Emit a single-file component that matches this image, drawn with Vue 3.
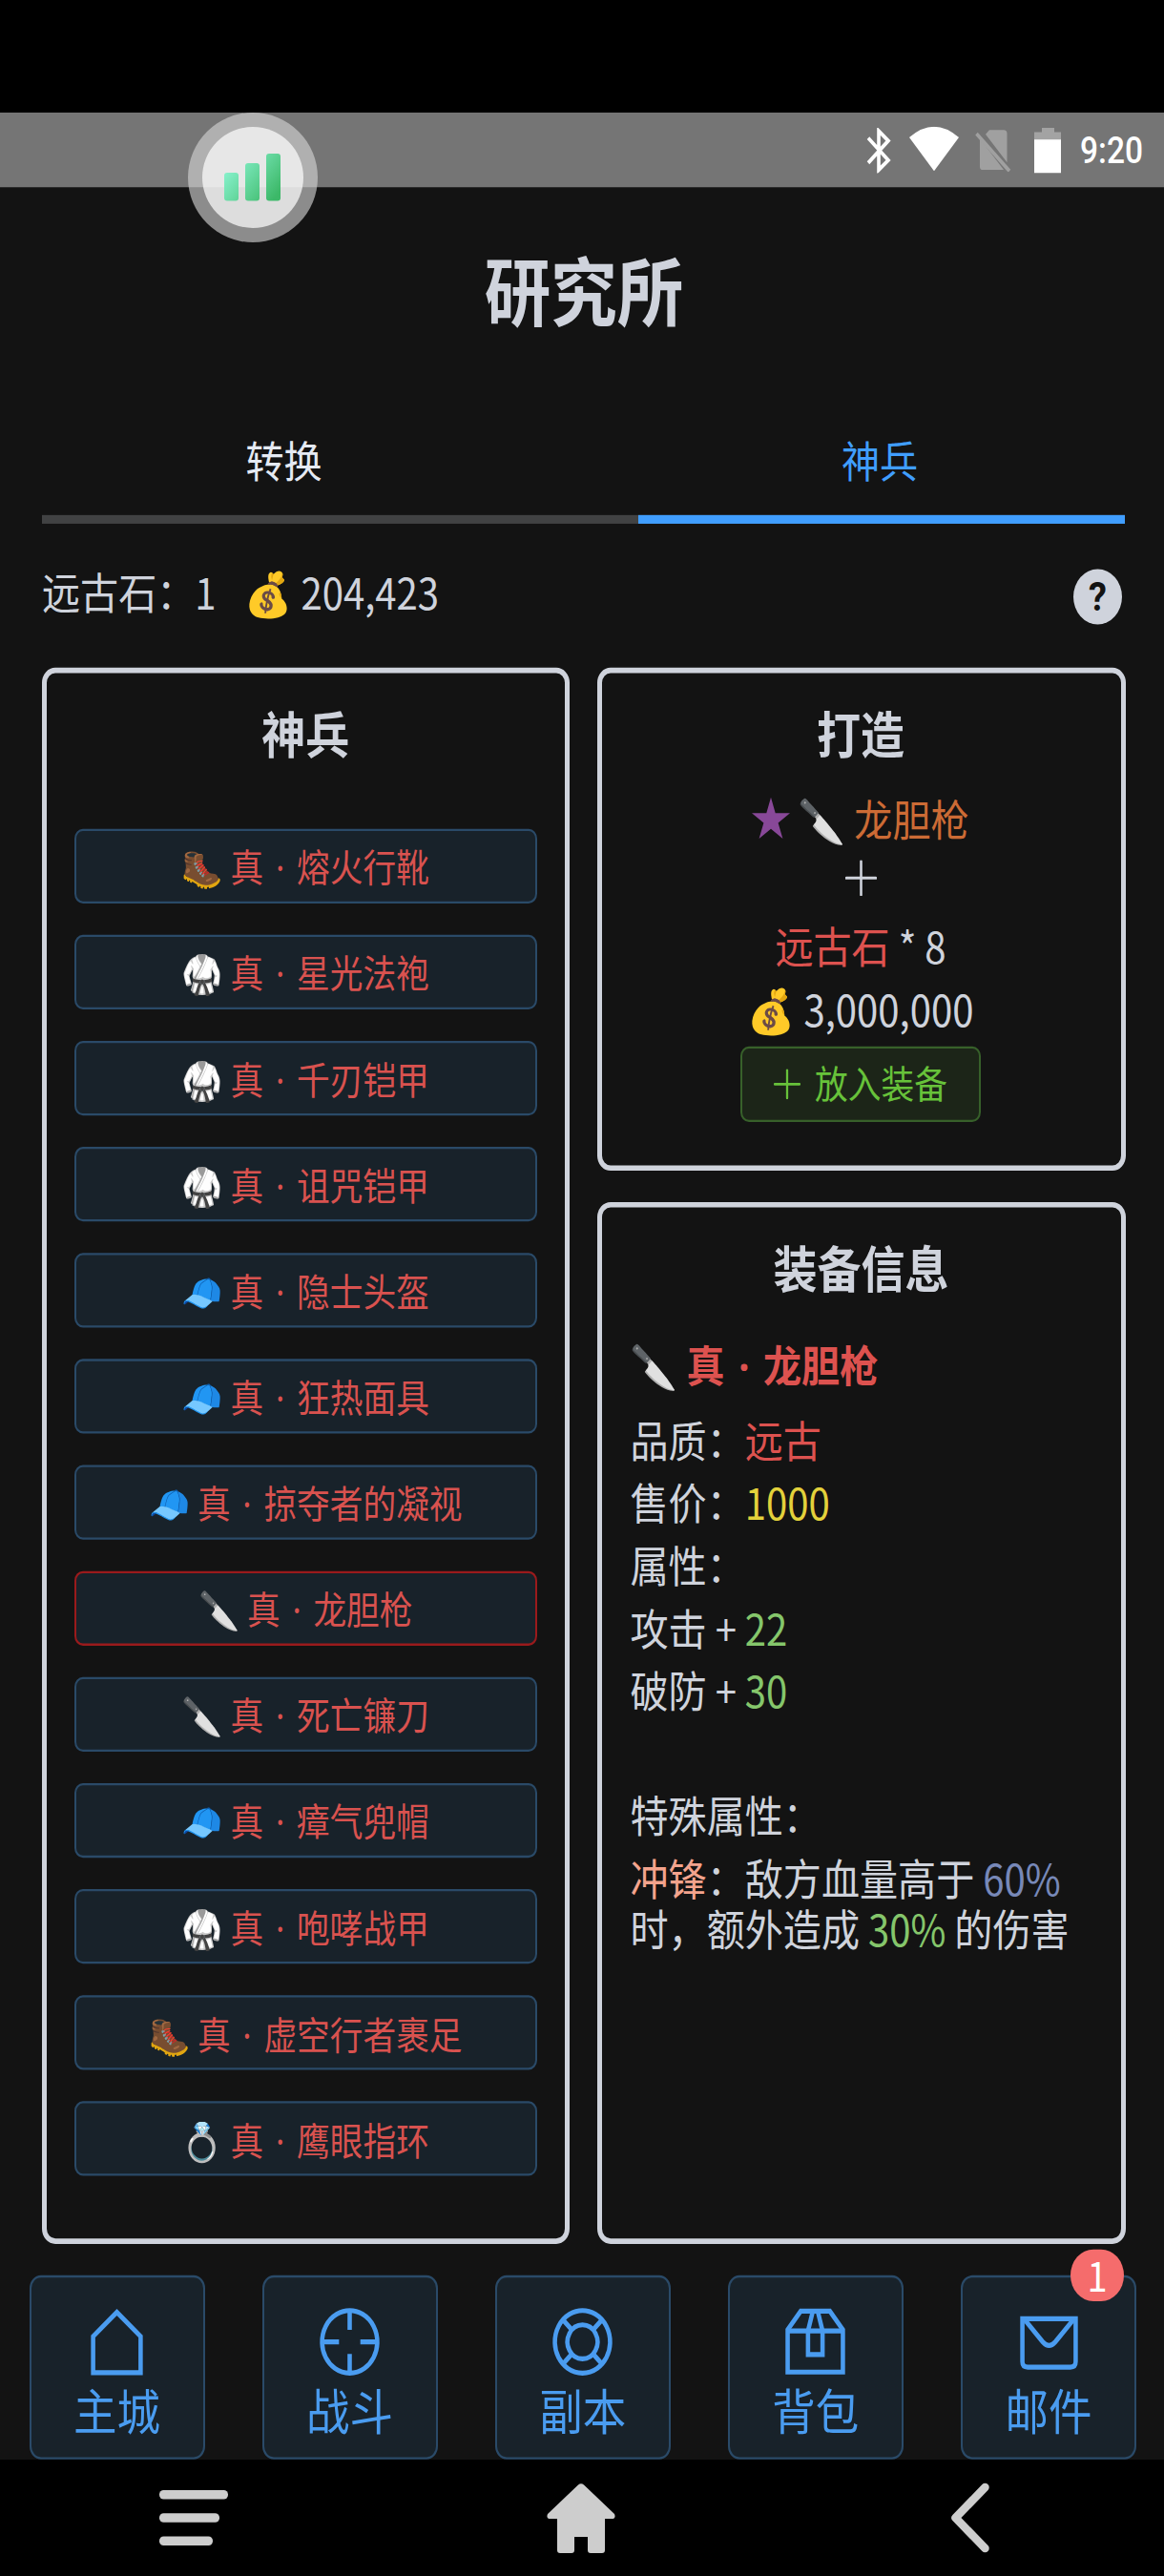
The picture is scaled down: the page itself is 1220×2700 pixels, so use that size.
<script setup>
const weapons = [
  { icon: '🥾', name: '熔火行靴' },
  { icon: '🥋', name: '星光法袍' },
  { icon: '🥋', name: '千刃铠甲' },
  { icon: '🥋', name: '诅咒铠甲' },
  { icon: '🧢', name: '隐士头盔' },
  { icon: '🧢', name: '狂热面具' },
  { icon: '🧢', name: '掠夺者的凝视' },
  { icon: '🔪', name: '龙胆枪', active: true },
  { icon: '🔪', name: '死亡镰刀' },
  { icon: '🧢', name: '瘴气兜帽' },
  { icon: '🥋', name: '咆哮战甲' },
  { icon: '🥾', name: '虚空行者裹足' },
  { icon: '💍', name: '鹰眼指环' },
]

const navItems = [
  { label: '主城', paths: ['M7.5 27 L32 5 L56.500 27 V60 H7.5 Z'] },
  { label: '战斗', paths: ['M32 3.500 a28.500 28.500 0 1 0 .01 0 Z', 'M32 4 V21 M32 43 V60 M4 32 H21 M43 32 H60'] },
  { label: '副本', paths: ['M32 3.500 a28.500 28.500 0 1 0 .01 0 Z', 'M32 16.500 a15.500 15.500 0 1 0 .01 0 Z', 'M12.200 12.200 L21.400 21.400 M51.800 12.200 L42.600 21.400 M12.200 51.800 L21.400 42.600 M51.800 51.800 L42.600 42.600'] },
  { label: '背包', paths: ['M3.500 21 L17 4 H47 L60.500 21 V59.500 H3.500 Z', 'M3.500 22 H60.500', 'M29.500 4 L24.500 22 V43.500 H39.500 V22 L34.500 4'] },
  { label: '邮件', paths: ['M4.500 11 H59.500 V50 Q59.500 55 54 55 H10 Q4.500 55 4.500 50 Z', 'M7 12 L25.500 32 Q32 38.500 38.500 32 L57 12'], badge: 1 },
]
</script>

<template>
  <div class="device">
    <div class="viewport">
      <main class="screen">
        <header class="statusbar">
          <svg class="bt" viewBox="0 0 26 42"><path d="M2 9.500 L23 30 L13 39 V3 L23 12 L2 32.500" fill="none" stroke="#fff" stroke-width="3.600" /></svg>
          <svg class="wifi" viewBox="0 0 52 41"><path d="M0 10 Q26 -10 52 10 L26 41 Z" fill="#fff" /></svg>
          <svg class="sim" viewBox="0 0 38 40">
            <path d="M15 1 H30 Q33.500 1 33.500 4.500 V31 L11 5 Z M5 9 L30 38 H8 Q5 38 5 35 Z" fill="#a0a0a0" />
            <path d="M1.500 4.500 L36 39" stroke="#a0a0a0" stroke-width="3.500" />
          </svg>
          <svg class="battery" viewBox="0 0 28 42">
            <path d="M8 0 H21 V4 H28 V12 H0 V4 H8 Z" fill="#a3a3a3" />
            <path d="M0 11 H28 V42 H0 Z" fill="#fff" />
          </svg>
          <span class="clock">9:20</span>
        </header>

        <h1 class="title">研究所</h1>

        <nav class="tabs">
          <span class="tab">转换</span>
          <span class="tab current">神兵</span>
        </nav>
        <div class="tabline"><i></i></div>

        <section class="resources">
          <span>远古石：1</span>
          <span class="gold">💰 204,423</span>
          <b class="help">?</b>
        </section>

        <div class="panels">
          <section class="panel list-panel">
            <h2>神兵</h2>
            <div class="list">
              <button v-for="w in weapons" :key="w.name" class="weapon" :class="{ active: w.active }">{{ w.icon }} 真 <i class="dot">·</i> {{ w.name }}</button>
            </div>
          </section>

          <div class="side">
            <section class="panel craft">
              <h2>打造</h2>
              <p class="row first">
                <svg class="star" viewBox="0 0 40 38"><path d="M20 0 L24.700 14.500 H40 L27.600 23.500 L32.400 38 L20 29 L7.600 38 L12.400 23.500 L0 14.500 H15.300 Z" fill="#884898" /></svg>
                <span>🔪 <em class="orange">龙胆枪</em></span>
              </p>
              <div class="plus"><svg viewBox="0 0 33 33"><path d="M16.500 1 V32 M1 16.500 H32" stroke="#cfd3dc" stroke-width="2.600" stroke-linecap="round" /></svg></div>
              <p class="row stone"><span><em class="red">远古石</em> * 8</span></p>
              <p class="row">💰 3,000,000</p>
              <button class="put">
                <svg viewBox="0 0 28 28"><path d="M14 1 V27 M1 14 H27" stroke="#67c23a" stroke-width="2.300" stroke-linecap="round" /></svg>
                <span>放入装备</span>
              </button>
            </section>

            <section class="panel info">
              <h2>装备信息</h2>
              <p class="name">🔪 <em class="red">真 <i class="dot">·</i> 龙胆枪</em></p>
              <p>品质：<em class="red">远古</em></p>
              <p>售价：<em class="yellow">1000</em></p>
              <p>属性：</p>
              <p>攻击 + <em class="green">22</em></p>
              <p>破防 + <em class="green">30</em></p>
              <p class="special">特殊属性：</p>
              <p class="effect"><em class="salmon">冲锋</em>：敌方血量高于 <em class="blue">60%</em><br />时，额外造成 <em class="green">30%</em> 的伤害</p>
            </section>
          </div>
        </div>

        <nav class="bottom">
          <button v-for="n in navItems" :key="n.label" class="navbtn">
            <svg viewBox="0 0 64 64"><path v-for="p in n.paths" :key="p" :d="p" /></svg>
            <span>{{ n.label }}</span>
            <b v-if="n.badge" class="badge">{{ n.badge }}</b>
          </button>
        </nav>
      </main>
    </div>

    <footer class="softkeys">
      <svg class="menu" viewBox="0 0 72 58" fill="#cdcdcd">
        <rect width="72" height="9.500" rx="4.500" />
        <rect y="24.300" width="63" height="9.500" rx="4.500" />
        <rect y="48.500" width="56" height="9.500" rx="4.500" />
      </svg>
      <svg class="home" viewBox="0 0 72 74">
        <path d="M33 2.500 Q36 0 39 2.500 L71 33 Q73 38 68 38 H61 V71 Q61 74 58 74 H46 Q43 74 43 71 V57 H29 V71 Q29 74 26 74 H14 Q11 74 11 71 V38 H4 Q-1 38 1 33 Z" fill="#cdcdcd" />
      </svg>
      <svg class="back" viewBox="0 0 42 74"><path d="M36.500 5 L5.500 37 L36.500 69" fill="none" stroke="#cdcdcd" stroke-width="8.500" stroke-linecap="round" stroke-linejoin="round" /></svg>
    </footer>

    <div class="floater">
      <svg viewBox="0 0 60 50">
        <defs>
          <linearGradient id="bars" gradientUnits="userSpaceOnUse" x1="0" y1="10" x2="50" y2="50">
            <stop offset="0" stop-color="#8ff7d6" />
            <stop offset="1" stop-color="#3cb868" />
          </linearGradient>
        </defs>
        <g fill="url(#bars)">
          <rect x="0" y="20" width="15" height="29.500" rx="3" />
          <rect x="22" y="10" width="15" height="39.500" rx="3" />
          <rect x="44" y="0" width="15" height="49.500" rx="3" />
        </g>
      </svg>
    </div>
  </div>
</template>

<style>
body { margin: 0; background: #000; }
</style>

<style scoped>
.device {
  position: relative;
  width: 1220px;
  height: 2700px;
  padding-top: 118px;
  box-sizing: border-box;
  overflow: hidden;
  background: #000;
  font-family: "Noto Sans CJK SC", "Noto Color Emoji", sans-serif;
}
.viewport { height: 2460px; overflow: hidden; background: #131313; }
/* the game is rendered at 16:9 and stretched to fill the taller display */
.screen {
  width: 1220px;
  height: 2170px;
  transform: scaleY(1.134);
  transform-origin: 0 0;
  color: #cfd3dc;
  font-size: 40.100px;
}
h1, h2, p { margin: 0; }
em, i { font-style: normal; }
button { font-family: inherit; margin: 0; padding: 0; box-sizing: border-box; }
.dot {
  display: inline-block;
  width: .555em;
  text-align: center;
  line-height: 1;
  font-family: "Noto Sans", sans-serif;
}

.statusbar {
  height: 69px;
  box-sizing: border-box;
  padding: 1px 22px 0 0;
  background: #757575;
  display: flex;
  align-items: center;
  justify-content: flex-end;
}
.bt { width: 26px; height: 42px; margin-right: 19px; }
.wifi { width: 52px; height: 41px; margin: 0 17px 3px 0; }
.sim { width: 38px; height: 40px; margin-right: 24px; }
.battery { width: 28px; height: 42px; margin-right: 20px; }
.clock { font: 500 33.500px/68px Roboto, sans-serif; color: #fff; padding-top: 1px; }

.title {
  margin-top: 43px;
  line-height: 100px;
  font-size: 69.500px;
  font-weight: 700;
  text-align: center;
  padding-left: 4px;
}
.tabs { display: flex; margin: 57px 41px 0 44px; }
.tab { line-height: 104px; height: 103px; width: 507px; text-align: center; color: #e5eaf3; }
.tab.current { width: 510px; margin-left: 116px; color: #409eff; }
.tabline { height: 8px; margin: 0 41px 0 44px; background: #414243; display: flex; justify-content: flex-end; }
.tabline i { width: 510px; background: #409eff; }

.resources { display: flex; align-items: center; height: 122px; margin: 0 44px; }
.gold { margin-left: 30px; }
.help {
  margin-left: auto;
  margin-top: 13px;
  width: 51px;
  height: 51px;
  border-radius: 50%;
  background: #cfd3dc;
  color: #131313;
  font: 700 38px/51px Roboto, sans-serif;
  text-align: center;
}

.panels { display: flex; gap: 29px; margin: 11px 40px 0 44px; height: 1456.500px; }
.panel { border: 5px solid #cfd3dc; border-radius: 14px; box-sizing: border-box; padding: 25px 29px 0; }
.panel h2 { font-size: 46px; line-height: 60px; font-weight: 700; text-align: center; }
.list-panel { width: 552.500px; }
.list { display: flex; flex-direction: column; gap: 29.060px; margin-top: 58.500px; }
.weapon {
  height: 69px;
  border: 2px solid #2a4a68;
  border-radius: 9px;
  background: #18222a;
  color: #d9524f;
  font-size: 34.700px;
  line-height: 62px;
  white-space: pre;
}
.weapon.active { border-color: #9a1a1c; }

.side { width: 554px; display: flex; flex-direction: column; gap: 29px; }
.craft { height: 464.500px; display: flex; flex-direction: column; align-items: center; padding-left: 28px; }
.row { height: 58px; line-height: 58px; display: flex; align-items: center; white-space: pre; }
.row.first { margin-top: 19.500px; }
.star { width: 40px; height: 38px; margin-right: 8px; }
.plus { height: 52px; display: flex; align-items: center; margin-top: .5px; }
.plus svg { width: 33px; height: 33px; }
.row.stone { margin-top: 7.600px; }
.put {
  margin-top: 6px;
  width: 252px;
  height: 70px;
  border: 2px solid #37602a;
  border-radius: 9px;
  background: #1c2518;
  color: #67c23a;
  font-size: 34.700px;
  line-height: 62px;
  display: flex;
  align-items: center;
  justify-content: center;
  gap: 15px;
}
.put svg { width: 28px; height: 28px; }
.put span { height: 65px; }

.info { flex: 1; padding: 24px 0 0 30px; }
.info h2 { margin-right: 30px; }
.info p { line-height: 57.800px; white-space: nowrap; }
.info .name { margin: 32px 0 12px; font-weight: 700; }
.info .special { margin-top: 57.800px; }
.info .effect { margin-top: 5px; line-height: 47.500px; }

.red { color: #dd524f; }
.orange { color: #cc6b35; }
.yellow { color: #e3d13b; }
.green { color: #85c66b; }
.salmon { color: #f3a38d; }
.blue { color: #7788b8; }

.bottom { display: flex; justify-content: space-between; margin: 29.500px 29px 0 30.500px; }
.navbtn {
  position: relative;
  width: 184px;
  height: 170px;
  border: 2px solid #2a4a68;
  border-radius: 12px;
  background: #18222a;
  color: #4a9cf0;
  font-size: 45.500px;
  line-height: 58px;
  display: flex;
  flex-direction: column;
  align-items: center;
  padding-top: 26.500px;
}
.navbtn svg { width: 65px; height: 65px; flex: none; fill: none; stroke: #4a9cf0; stroke-width: 4.500; }
.badge {
  position: absolute;
  top: -26px;
  right: 11px;
  width: 56px;
  height: 48px;
  border-radius: 24px;
  background: #f56c6c;
  color: #fff;
  font-size: 38px;
  line-height: 45px;
  font-weight: 400;
  text-align: center;
}

.softkeys { height: 122px; display: flex; align-items: center; padding-left: 167px; }
.menu { width: 72px; height: 58px; }
.home { width: 72px; height: 74px; margin-left: 334px; }
.back { width: 42px; height: 74px; margin-left: 350.500px; }

.floater {
  position: absolute;
  left: 196.500px;
  top: 118px;
  width: 136px;
  height: 136px;
  box-sizing: border-box;
  border-radius: 50%;
  background: rgba(210, 210, 210, .63);
  display: flex;
  align-items: center;
  justify-content: center;
}
.floater::before {
  content: "";
  position: absolute;
  inset: 15px;
  border-radius: 50%;
  background: rgba(255, 255, 255, .7);
}
.floater svg { position: relative; width: 60px; height: 50px; left: .5px; }
</style>
